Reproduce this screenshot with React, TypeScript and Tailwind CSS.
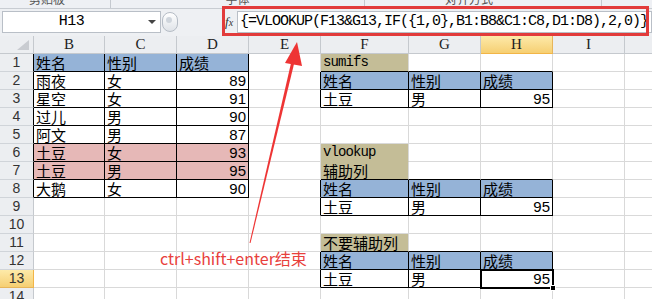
import React from "react";

type Kind = "num" | "mono" | "txt";
type Fill = "blue" | "pink" | "tan";
type Cell = { t: string; kind: Kind; fill?: Fill };

const cells: Record<string, Cell> = {};
const put = (r: number, c: number, t: string, kind: Kind, fill?: Fill) => {
  cells[`${r}-${c}`] = { t, kind, fill };
};

// columns: 1=B 2=C 3=D 4=E 5=F 6=G 7=H 8=I 9=J
const hdr = (r: number, c0: number) => {
  put(r, c0, "姓名", "txt", "blue");
  put(r, c0 + 1, "性别", "txt", "blue");
  put(r, c0 + 2, "成绩", "txt", "blue");
};
hdr(1, 1);
const left: [string, string, string, Fill?][] = [
  ["雨夜", "女", "89"],
  ["星空", "女", "91"],
  ["过儿", "男", "90"],
  ["阿文", "男", "87"],
  ["土豆", "女", "93", "pink"],
  ["土豆", "男", "95", "pink"],
  ["大鹅", "女", "90"],
];
left.forEach((row, i) => {
  put(i + 2, 1, row[0], "txt", row[3]);
  put(i + 2, 2, row[1], "txt", row[3]);
  put(i + 2, 3, row[2], "num", row[3]);
});
put(1, 5, "sumifs", "mono", "tan");
hdr(2, 5);
put(3, 5, "土豆", "txt");
put(3, 6, "男", "txt");
put(3, 7, "95", "num");
put(6, 5, "vlookup", "mono", "tan");
put(7, 5, "辅助列", "txt", "tan");
hdr(8, 5);
put(9, 5, "土豆", "txt");
put(9, 6, "男", "txt");
put(9, 7, "95", "num");
put(11, 5, "不要辅助列", "txt", "tan");
hdr(12, 5);
put(13, 5, "土豆", "txt");
put(13, 6, "男", "txt");
put(13, 7, "95", "num");

const inTable = (r: number, c: number) => {
  if (r >= 1 && r <= 8 && c >= 1 && c <= 3) return true;
  if (c >= 5 && c <= 7 && [2, 3, 8, 9, 12, 13].includes(r)) return true;
  return false;
};

const letters = ["B", "C", "D", "E", "F", "G", "H", "I", "J"];
const rows = Array.from({ length: 14 }, (_, i) => i + 1);
const cols = Array.from({ length: 9 }, (_, i) => i + 1);

const fillCls: Record<Fill, string> = {
  blue: "bg-[#95b3d7]",
  pink: "bg-[#e6b8b7]",
  tan: "bg-[#c4bd97]",
};
const kindCls: Record<Kind, string> = {
  num: "justify-end pr-[2px] font-['Liberation_Sans',sans-serif] text-[15px]",
  txt: "pl-[2px] font-['Noto_Sans_CJK_SC',sans-serif] text-[15px]",
  mono: "pl-[2px] font-['Liberation_Mono',monospace] text-[14px] tracking-[-0.9px]",
};

function GridCell({ r, c }: { r: number; c: number }) {
  const cell = cells[`${r}-${c}`];
  const rightBlack = inTable(r, c) || inTable(r, c + 1);
  const bottomBlack = inTable(r, c) || inTable(r + 1, c);
  let bcls = bottomBlack ? "border-b-black" : "border-b-[#d9d9d9]";
  if (r === 6 && c === 5) bcls = "border-b-[#c4bd97]";
  const rcls = rightBlack ? "border-r-black" : "border-r-[#d9d9d9]";
  const bg = cell?.fill ? fillCls[cell.fill] : "bg-white";
  return (
    <div
      className={`flex h-[18px] items-end whitespace-nowrap border-r border-b leading-[17px] text-black ${rcls} ${bcls} ${bg} ${
        cell ? kindCls[cell.kind] : ""
      }`}
    >
      {cell?.t}
    </div>
  );
}

export default function App() {
  return (
    <div className="relative h-[299px] w-[652px] overflow-hidden bg-white">
      {/* ribbon remnant */}
      <div className="flex h-[9px] overflow-hidden border-b border-[#c8ccd2] bg-[#eef0f4] font-['Noto_Sans_CJK_SC',sans-serif] text-[12px] leading-[14px] text-[#555]">
        <div className="w-[111px] border-r border-[#c5c9cf] pl-[29px]">
          <div className="-mt-[8px]">剪贴板</div>
        </div>
        <div className="flex w-[254px] justify-center border-r border-[#c5c9cf]">
          <div className="-mt-[8px]">字体</div>
        </div>
        <div className="w-[237px] border-r border-[#c5c9cf] pl-[80px]">
          <div className="-mt-[8px]">对齐方式</div>
        </div>
      </div>

      {/* formula bar */}
      <div className="flex h-[27px] items-start bg-[#eef0f3] pt-[2px]">
        <div className="ml-[2px] flex h-[22px] w-[159px] items-center border border-[#b9bfc7] bg-white">
          <div className="w-[137px] text-center font-['Liberation_Mono',monospace] text-[15px] tracking-[-0.5px] text-black">
            H13
          </div>
          <svg width="8" height="5" viewBox="0 0 8 5" className="ml-[8px]">
            <polygon points="0,0 8,0 4,4" fill="#444" />
          </svg>
        </div>
        <div className="ml-[1px] mt-[1px] h-[20px] w-[16px] rounded-full border border-[#b5bcc5] bg-linear-to-b from-[#ffffff] to-[#dfe3e8]">
          <div className="ml-[3px] mt-[4px] h-[6px] w-[6px] rounded-full bg-[#cfd5dc]" />
        </div>
        <div className="ml-[47px] mt-[4px] w-[12px] font-['Liberation_Serif',serif] text-[13px] italic leading-[14px] text-[#333]">
          f<span className="text-[10px]">x</span>
        </div>
        <div className="flex h-[22px] flex-1 items-center border border-[#b9bfc7] bg-white pl-[2px] font-['Liberation_Mono',monospace] text-[15px] tracking-[-1px] text-black">
          {"{=VLOOKUP(F13&G13,IF({1,0},B1:B8&C1:C8,D1:D8),2,0)}"}
        </div>
      </div>

      {/* sheet grid */}
      <div className="grid grid-cols-[34px_71px_72px_72px_72px_88px_72px_72px_72px_72px]">
        {/* corner */}
        <div className="relative h-[18px] border-r border-b border-[#c5c9ce] bg-[#eceef1]">
          <svg width="12" height="10" viewBox="0 0 12 10" className="absolute right-[4px] bottom-[3px]">
            <polygon points="12,0 12,10 0,10" fill="#c9ccd1" />
          </svg>
        </div>
        {letters.map((l, i) => (
          <div
            key={l}
            className={`flex h-[18px] items-center justify-center border-r border-b font-['Liberation_Serif',serif] text-[15px] leading-[17px] text-[#222] ${
              i === 6
                ? "border-r-[#e7b55a] border-b-[#f2b547] bg-linear-to-b from-[#fdeaa9] to-[#f6cf72]"
                : "border-r-[#c5c9ce] border-b-[#c5c9ce] bg-[#eceef1]"
            }`}
          >
            {l}
          </div>
        ))}
        {rows.map((r) => (
          <React.Fragment key={r}>
            <div
              className={`flex h-[18px] items-end justify-center border-r border-b font-['Liberation_Sans',sans-serif] text-[14px] leading-[17px] text-[#333] ${
                r === 13
                  ? "border-r-[#f2b547] border-b-[#e7b55a] bg-linear-to-b from-[#fdeaa9] to-[#f6cf72]"
                  : r <= 8
                  ? "border-r-black border-b-[#d0d4d9] bg-[#eceef1]"
                  : "border-r-[#c5c9ce] border-b-[#d0d4d9] bg-[#eceef1]"
              }`}
            >
              {r}
            </div>
            {cols.map((c) => (
              <GridCell key={c} r={r} c={c} />
            ))}
          </React.Fragment>
        ))}
      </div>

      {/* selection on H13 */}
      <div className="pointer-events-none absolute left-[480px] top-[269px] h-[20px] w-[74px] border-2 border-black">
        <div className="h-full w-full border border-white" />
        <div className="absolute -right-[4px] -bottom-[4px] h-[6px] w-[6px] border border-white bg-black" />
      </div>

      {/* red annotation box */}
      <div className="pointer-events-none absolute left-[222px] top-[6px] h-[30px] w-[427px] border-[3px] border-[#e23b3b]" />

      {/* arrow */}
      <svg className="pointer-events-none absolute left-0 top-0" width="652" height="299" viewBox="0 0 652 299">
        <polygon points="249.5,243 250.5,243 294.5,62 291.5,61" fill="#ee3434" />
        <polygon points="297,42 285,63 302,66" fill="#ee3434" />
      </svg>

      {/* red note */}
      <div className="pointer-events-none absolute left-[160px] top-[248px] whitespace-nowrap font-['Noto_Sans_CJK_SC',sans-serif] text-[16px] leading-[20px] text-[#e8403c]">
        ctrl+shift+enter结束
      </div>
    </div>
  );
}
